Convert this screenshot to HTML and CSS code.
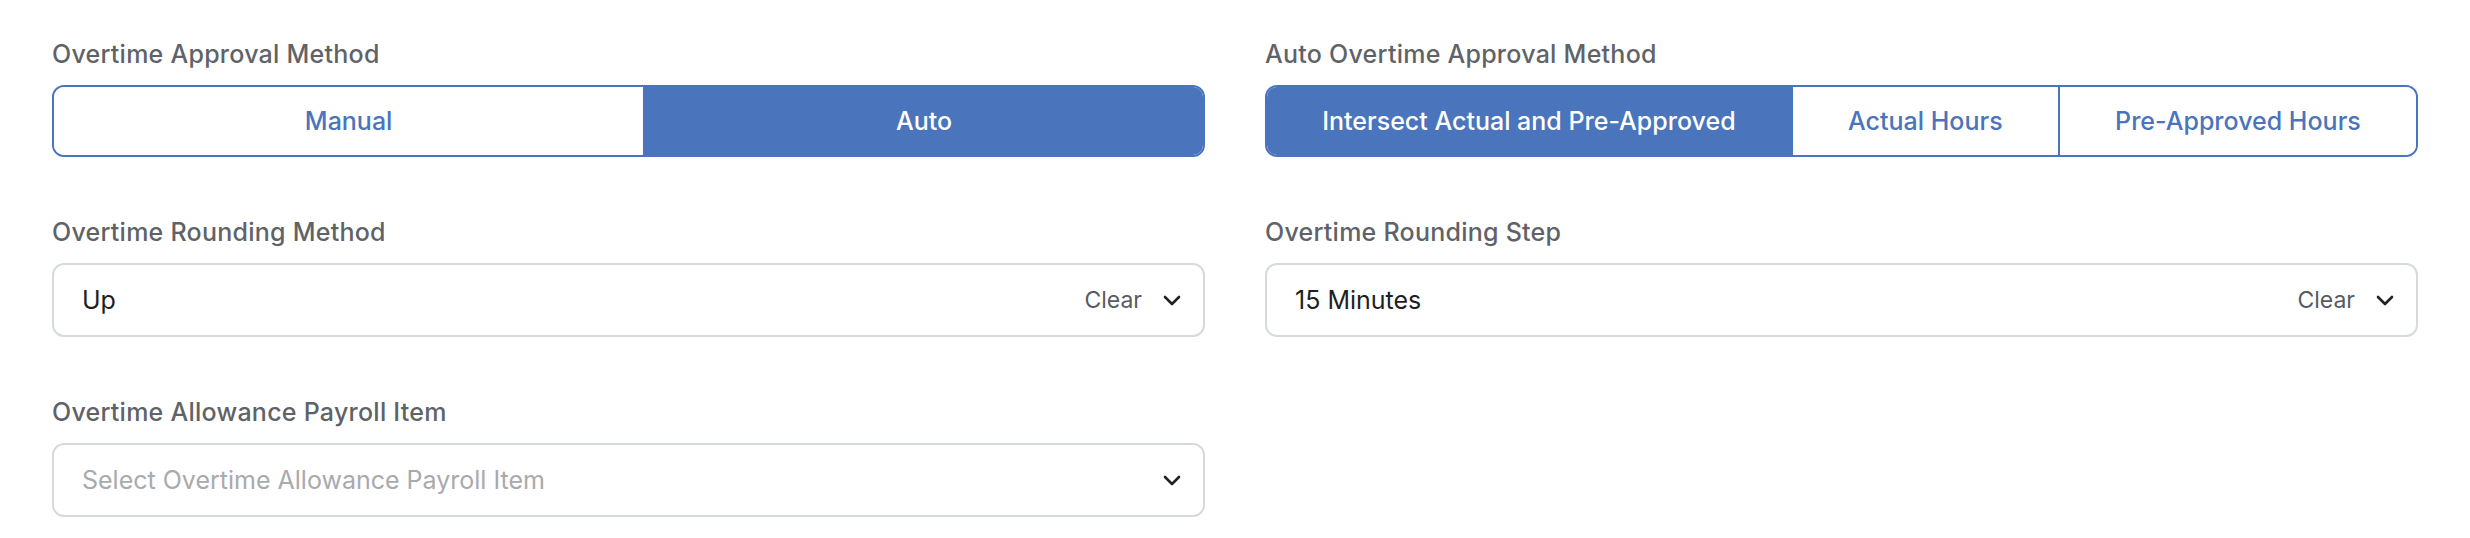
FILE: index.html
```html
<!DOCTYPE html>
<html lang="en">
<head>
<meta charset="utf-8">
<title>Overtime Settings</title>
<link rel="stylesheet" href="styles.css">
</head>
<body>
<div class="form">
  <div class="field">
    <div class="label">Overtime Approval Method</div>
    <div class="seg">
      <div class="seg-item">Manual</div>
      <div class="seg-item active">Auto</div>
    </div>
  </div>
  <div class="field">
    <div class="label">Auto Overtime Approval Method</div>
    <div class="seg">
      <div class="seg-item active">Intersect Actual and Pre-Approved</div>
      <div class="seg-item">Actual Hours</div>
      <div class="seg-item">Pre-Approved Hours</div>
    </div>
  </div>
  <div class="field">
    <div class="label">Overtime Rounding Method</div>
    <div class="select">
      <span class="value">Up</span>
      <span class="clear">Clear</span>
      <svg class="chev" width="18" height="11" viewBox="0 0 18 11"><path d="M2 2 L9 9 L16 2" fill="none" stroke="#222" stroke-width="2.6" stroke-linecap="round" stroke-linejoin="round"/></svg>
    </div>
  </div>
  <div class="field">
    <div class="label">Overtime Rounding Step</div>
    <div class="select">
      <span class="value">15 Minutes</span>
      <span class="clear">Clear</span>
      <svg class="chev" width="18" height="11" viewBox="0 0 18 11"><path d="M2 2 L9 9 L16 2" fill="none" stroke="#222" stroke-width="2.6" stroke-linecap="round" stroke-linejoin="round"/></svg>
    </div>
  </div>
  <div class="field">
    <div class="label">Overtime Allowance Payroll Item</div>
    <div class="select">
      <span class="value placeholder">Select Overtime Allowance Payroll Item</span>
      <svg class="chev" width="18" height="11" viewBox="0 0 18 11"><path d="M2 2 L9 9 L16 2" fill="none" stroke="#222" stroke-width="2.6" stroke-linecap="round" stroke-linejoin="round"/></svg>
    </div>
  </div>
</div>
</body>
</html>
```
FILE: styles.css
```css
html, body {
  margin: 0;
  padding: 0;
  background: #ffffff;
}

body {
  font-family: "Inter", "Liberation Sans", sans-serif;
  color: #1e1f21;
}

.form {
  display: grid;
  grid-template-columns: 1fr 1fr;
  column-gap: 60px;
  row-gap: 59px;
  padding: 38px 52px 0 52px;
}

.field {
  display: flex;
  flex-direction: column;
}

.label {
  font-size: 25px;
  line-height: 32px;
  font-weight: 500;
  letter-spacing: 0.25px;
  color: #5f6368;
  margin-bottom: 15px;
}

.seg {
  display: flex;
  height: 72px;
  box-sizing: border-box;
  border: 2px solid #4a74bc;
  border-radius: 12px;
  overflow: hidden;
}

.seg-item {
  flex: 1 1 auto;
  display: flex;
  align-items: center;
  justify-content: center;
  font-size: 25px;
  font-weight: 500;
  color: #4a74bc;
  background: #ffffff;
  white-space: nowrap;
}

.seg-item + .seg-item {
  border-left: 2px solid #4a74bc;
}

.seg-item.active {
  background: #4a74bc;
  color: #ffffff;
}

.select {
  display: flex;
  align-items: center;
  height: 74px;
  box-sizing: border-box;
  border: 2px solid #d6dadd;
  border-radius: 12px;
  padding: 0 22px 0 28px;
}

.value {
  flex: 1 1 auto;
  font-size: 25px;
  color: #1e1f21;
}

.value.placeholder {
  color: #a8aaad;
}

.clear {
  font-size: 23px;
  color: #585b62;
  margin-right: 21px;
}

.chev {
  flex: 0 0 auto;
  display: block;
}
```
